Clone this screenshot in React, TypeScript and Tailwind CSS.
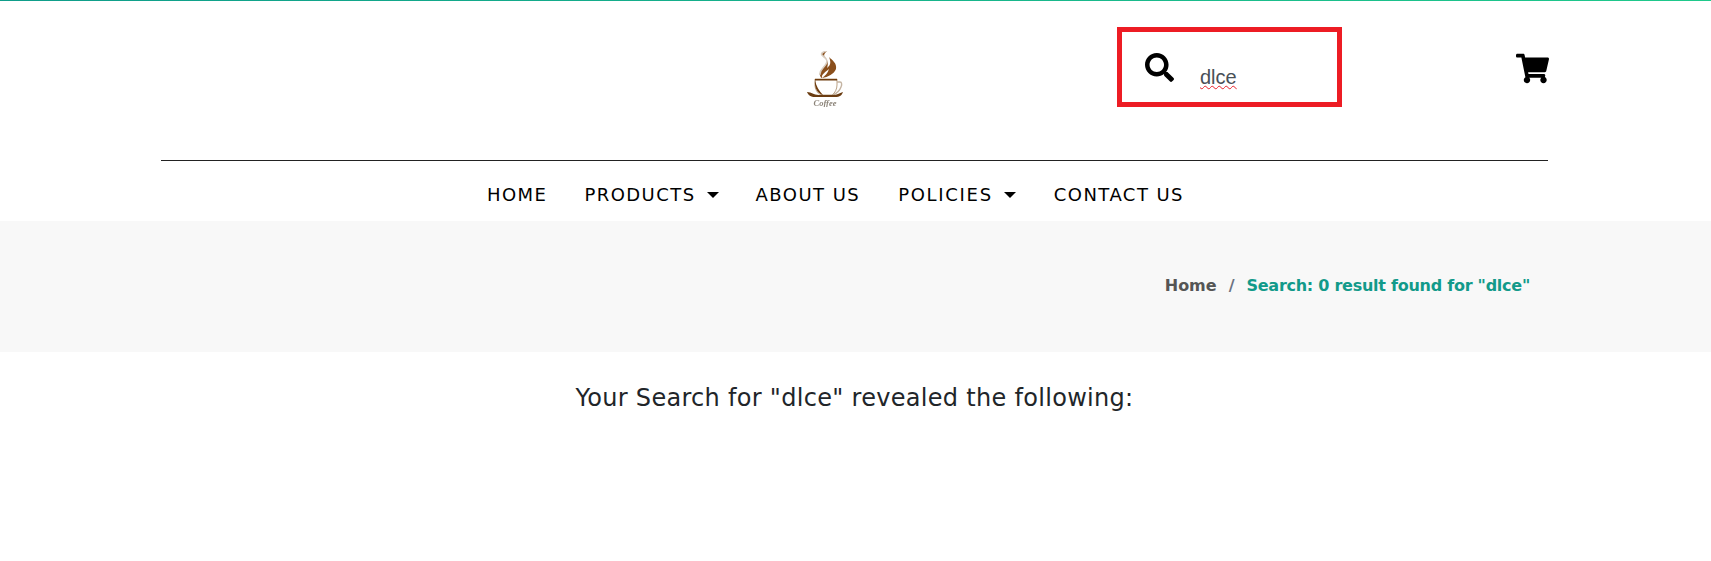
import { FaSearch, FaShoppingCart } from "react-icons/fa";

const font = { fontFamily: '"DejaVu Sans", sans-serif' };

function Logo() {
  return (
    <svg width="36" height="56" viewBox="0 0 36 56" className="block" style={{ filter: "blur(0.4px)" }}>
      <path d="M20 0c-5 1-7 3-4 5 4 3 5 5 3 8-2 4-7 6-6 11 0 1 1 3 2 3-1-4 4-6 7-9-1 4-4 7-7 9 6-1 12-4 14-9 1-6-4-9-7-12 2 5 2 8-2 11 2-5 0-8-2-11-2-2 0-4 2-6z" fill="#8a4f1c" />
      <path d="M20 0c-5 1-7 3-4 5 4 3 5 5 3 8-2 4-7 6-6 11" fill="none" stroke="#d8cdc0" strokeWidth="1.6" />
      <path d="M8 28h22v6c0 4-2 8-5 10H14c-4-2-6-6-6-10z" fill="#fff" stroke="#a98a68" strokeWidth="0.8" />
      <path d="M8 28h22v1.5H8zM8 29c1 6 4 11 8 15-5-1-9-7-8-15z" fill="#6f3c0e" />
      <path d="M30 31h3c2 0 2 3 1 5-1 3-4 6-8 8" fill="none" stroke="#c4b4a2" strokeWidth="1.4" />
      <path d="M0 41c5 0 6 3 12 3h14c4 0 6-2 10-3-1 3-3 5-8 5H8c-4 0-7-2-8-5z" fill="#6b3d12" />
      <text x="18" y="55" textAnchor="middle" fontSize="8.5" fontStyle="italic" fontWeight="700" fill="#8b8378" fontFamily="Liberation Serif, serif">
        Coffee
      </text>
    </svg>
  );
}

function NavItem({ label, caret }: { label: string; caret?: boolean }) {
  return (
    <a className="flex items-center text-[18px] leading-[27px] tracking-[1.45px] text-black">
      {label}
      {caret && (
        <span className="ml-[11px] w-0 h-0 border-x-[6px] border-x-transparent border-t-[6px] border-t-black" />
      )}
    </a>
  );
}

export default function App() {
  return (
    <div className="min-h-[561px] bg-white" style={font}>
      <div className="h-px bg-gradient-to-r from-[#0f9d8a] to-[#1fc98b]" />
      <header className="mx-auto w-[1387px] h-[160px] border-b border-[#222] relative left-[-1px] flex items-start">
        <div className="w-[646px] shrink-0" />
        <div className="mt-[50px] shrink-0">
          <Logo />
        </div>
        <div className="ml-[274px] mt-[26px] w-[225px] h-[80px] border-[5px] border-[#ed1c24] flex items-start shrink-0">
          <FaSearch className="ml-[23px] mt-[21px] text-[29px] text-black" />
          <span
            className="ml-[26px] mt-[33px] text-[20px] leading-[24px] text-[#495057] underline decoration-wavy decoration-[#e8212b] decoration-1 underline-offset-[1px]"
            style={{ fontFamily: '"Liberation Sans", sans-serif' }}
          >
            dlce
          </span>
        </div>
        <FaShoppingCart className="ml-[174px] mt-[51px] text-[33px] text-black shrink-0" />
      </header>
      <nav className="flex justify-center gap-[37px] h-[60px] pt-[7px] pr-[40px]">
        <NavItem label="HOME" />
        <NavItem label="PRODUCTS" caret />
        <NavItem label="ABOUT US" />
        <div className="flex ml-px mr-px tracking-normal">
          <a className="flex items-center text-[18px] leading-[27px] tracking-[1.7px] text-black">
            POLICIES
            <span className="ml-[11px] w-0 h-0 border-x-[6px] border-x-transparent border-t-[6px] border-t-black" />
          </a>
        </div>
        <NavItem label="CONTACT US" />
      </nav>
      <div className="h-[131px] bg-[#f8f8f8] flex justify-end items-start pt-[53px] pr-[181px] text-[16px] leading-[24px] font-bold">
        <span className="text-[#555]">Home</span>
        <span className="mx-[12px] text-[#6b7280]">/</span>
        <span className="text-[#129a8a] tracking-[-0.26px]">Search: 0 result found for "dlce"</span>
      </div>
      <h2 className="mt-[28px] pr-[2px] text-center text-[24px] leading-[36px] tracking-[0.3px] text-[#212529]">
        Your Search for "dlce" revealed the following:
      </h2>
    </div>
  );
}
